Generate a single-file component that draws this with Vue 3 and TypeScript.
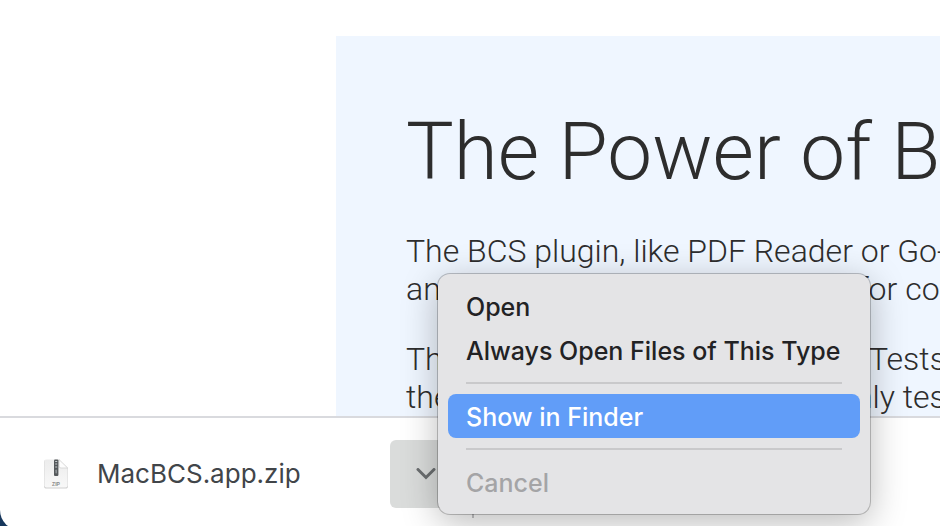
<script setup lang="ts">
import { ref } from 'vue'

interface MenuItem {
  label: string
  disabled?: boolean
}

const groups: MenuItem[][] = [
  [{ label: 'Open' }, { label: 'Always Open Files of This Type' }],
  [{ label: 'Show in Finder' }],
  [{ label: 'Cancel', disabled: true }],
]

const active = ref('Show in Finder')
const menuOpen = ref(true)
</script>

<template>
  <div class="desktop">
    <div class="window">
      <main class="page">
        <article class="panel">
          <h1>The Power of B</h1>
          <p>
            <span class="line">The BCS plugin, like PDF Reader or Go-</span>
            <span class="line"><span class="start">an</span><span>for co</span></span>
          </p>
          <p>
            <span class="line"><span class="start wide">Th</span><span>Tests</span></span>
            <span class="line"><span class="start narrow">the</span><span>only tes</span></span>
          </p>
        </article>
      </main>

      <footer class="downloads">
        <div class="file">
          <svg class="zip" viewBox="0 0 26 32" width="26" height="32" aria-hidden="true">
            <defs>
              <linearGradient id="paper" x1="0" y1="0" x2="0" y2="1">
                <stop offset="0" stop-color="#ececec" />
                <stop offset="1" stop-color="#f8f8f8" />
              </linearGradient>
            </defs>
            <path d="M3 2H16L25 10V28Q25 30.600 22.500 30.600H3.500Q1 30.600 1 28V4Q1 2 3 2Z" fill="#d0d0d0" />
            <path d="M3 1.500H16L24.600 10V27.500Q24.600 29.600 22.500 29.600H3.500Q1.400 29.600 1.400 27.500V3.500Q1.400 1.500 3 1.500Z" fill="url(#paper)" />
            <path d="M16 1.500L24.600 10H18Q16 10 16 8Z" fill="#fdfdfd" stroke="#d2d2d2" stroke-width="0.800" />
            <rect x="11" y="1.500" width="4.400" height="16.500" rx="1" fill="#54585b" />
            <path d="M12.200 3.500h2M12.200 6h2M12.200 9h2" stroke="#c5cacd" stroke-width="1.100" />
            <rect x="12.400" y="11.500" width="1.600" height="4" rx="0.800" fill="#8c9194" />
            <text x="13" y="28" text-anchor="middle">ZIP</text>
          </svg>
          <span class="name">MacBCS.app.zip</span>
        </div>
        <button class="toggle" type="button" aria-label="Download options" :aria-expanded="menuOpen">
          <svg viewBox="0 0 20 12" width="20" height="12" aria-hidden="true">
            <path d="M2 1.500L10 9.500L18 1.500" fill="none" stroke="#6b6e70" stroke-width="3" stroke-linecap="round" />
          </svg>
        </button>
        <span class="divider"></span>
      </footer>
    </div>

    <div v-if="menuOpen" class="menu" role="menu">
      <template v-for="(group, i) in groups" :key="i">
        <hr v-if="i > 0" />
        <button
          v-for="item in group"
          :key="item.label"
          type="button"
          role="menuitem"
          :class="{ active: item.label === active }"
          :disabled="item.disabled"
          @mouseenter="active = item.label"
        >
          {{ item.label }}
        </button>
      </template>
    </div>
  </div>
</template>

<style>
body {
  margin: 0;
}
</style>

<style scoped>
.desktop {
  position: relative;
  min-height: 100vh;
  display: flex;
  overflow: hidden;
  background: #17375c;
  font-family: Inter, 'Liberation Sans', sans-serif;
}

.window {
  flex: 1;
  min-width: 0;
  display: flex;
  flex-direction: column;
  margin-bottom: -4px;
  background: #fff;
  border-bottom-left-radius: 20px;
  overflow: hidden;
}

.page {
  flex: 1;
  display: flex;
  padding: 36px 0 0 336px;
}

.panel {
  flex: 1;
  min-width: 0;
  box-sizing: border-box;
  padding: 68px 0 0 70px;
  background: #eff6ff;
  color: #2d2d2d;
  font-family: Roboto, sans-serif;
  font-weight: 300;
  white-space: nowrap;
}

h1 {
  margin: 0;
  font-size: 80px;
  line-height: 96px;
  font-weight: 300;
}

p {
  margin: 32px 0 0;
  font-size: 32px;
  line-height: 38px;
}

.line {
  display: flex;
}

.start {
  flex: none;
  width: 452px;
}

.start.wide {
  width: 463px;
}

.start.narrow {
  width: 431px;
}

.downloads {
  display: flex;
  align-items: center;
  height: 112px;
  border-top: 2px solid #d9dade;
}

.file {
  box-sizing: border-box;
  display: flex;
  align-items: center;
  gap: 28px;
  width: 390px;
  padding-left: 43px;
}

.zip text {
  font: 700 5px 'Liberation Sans', sans-serif;
  fill: #8a8a8a;
}

.name {
  color: #414549;
  font-size: 26px;
  line-height: 32px;
}

.toggle {
  display: grid;
  place-items: center;
  width: 72px;
  height: 68px;
  margin: 0;
  padding: 0;
  border: 0;
  border-radius: 6px;
  background: #dadcdb;
}

.divider {
  width: 2px;
  height: 88px;
  margin-left: 10px;
  background: #c6c6c8;
}

.menu {
  position: absolute;
  left: 438px;
  top: 274px;
  box-sizing: border-box;
  width: 432px;
  padding: 10px;
  border-radius: 12px;
  background: #e4e4e6;
  box-shadow: 0 0 0 1px rgba(0, 0, 0, 0.22), 0 8px 36px rgba(0, 0, 0, 0.28);
}

.menu button {
  display: block;
  box-sizing: border-box;
  width: 100%;
  height: 44px;
  margin: 0;
  padding: 2px 18px 0;
  border: 0;
  border-radius: 8px;
  background: transparent;
  color: #222224;
  font: 500 25px/42px Inter, 'Liberation Sans', sans-serif;
  text-align: left;
  white-space: nowrap;
}

.menu button.active {
  background: #619df8;
  color: #fff;
}

.menu button:disabled {
  color: #a4a4a6;
}

.menu hr {
  height: 2px;
  margin: 10px 18px;
  border: 0;
  background: #c9c9cb;
}
</style>
